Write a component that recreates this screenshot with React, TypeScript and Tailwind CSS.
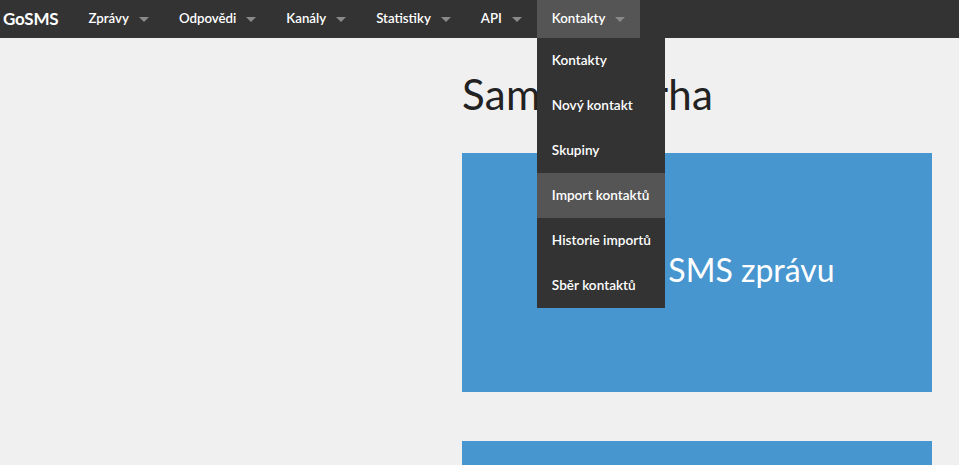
import { useState } from 'react';

const NAV = ['Zprávy', 'Odpovědi', 'Kanály', 'Statistiky', 'API', 'Kontakty'];

const MENU = ['Kontakty', 'Nový kontakt', 'Skupiny', 'Import kontaktů', 'Historie importů', 'Sběr kontaktů'];

function Caret() {
  return <span className="ml-[10px] inline-block w-0 h-0 border-x-[5px] border-x-transparent border-t-[5px] border-t-[#8a8a8a]" />;
}

export default function App() {
  const [active] = useState('Kontakty');
  const [hovered] = useState('Import kontaktů');

  return (
    <div className="min-h-screen bg-[#f0f0f0] font-['Lato','Liberation_Sans',sans-serif] overflow-hidden h-[465px]">
      <nav className="h-[38px] bg-[#333333] flex items-stretch text-white">
        <div className="pl-[3px] pr-[15px] flex items-center text-[17px] font-bold tracking-[-0.2px]">GoSMS</div>
        {NAV.map(n => (
          <div key={n} className={`relative px-[15px] flex items-center text-[13.25px] font-semibold ${n === active ? 'bg-[#555555]' : ''}`}>
            {n}
            <Caret />
            {n === active && (
              <ul className="absolute left-0 top-[38px] w-[128px] bg-[#333333] z-10">
                {MENU.map(m => (
                  <li key={m} className={`h-[45px] px-[15px] flex items-center text-[13.6px] font-semibold whitespace-nowrap ${m === hovered ? 'bg-[#555555]' : ''}`}>
                    {m}
                  </li>
                ))}
              </ul>
            )}
          </div>
        ))}
      </nav>

      <div className="grid grid-cols-[462px_470px]">
        <div />
        <div>
          <h1 className="mt-[32px] text-[42px] leading-[48px] text-[#222222] font-normal tracking-[0.3px]">Samuel Skrha</h1>
          <div className="mt-[35px] h-[239px] bg-[#4896cf] flex items-center justify-center">
            <span className="text-white text-[32px] mb-[6px] ml-[-8px]">Odeslat SMS zprávu</span>
          </div>
          <div className="mt-[49px] h-[60px] bg-[#4896cf]" />
        </div>
      </div>
    </div>
  );
}
